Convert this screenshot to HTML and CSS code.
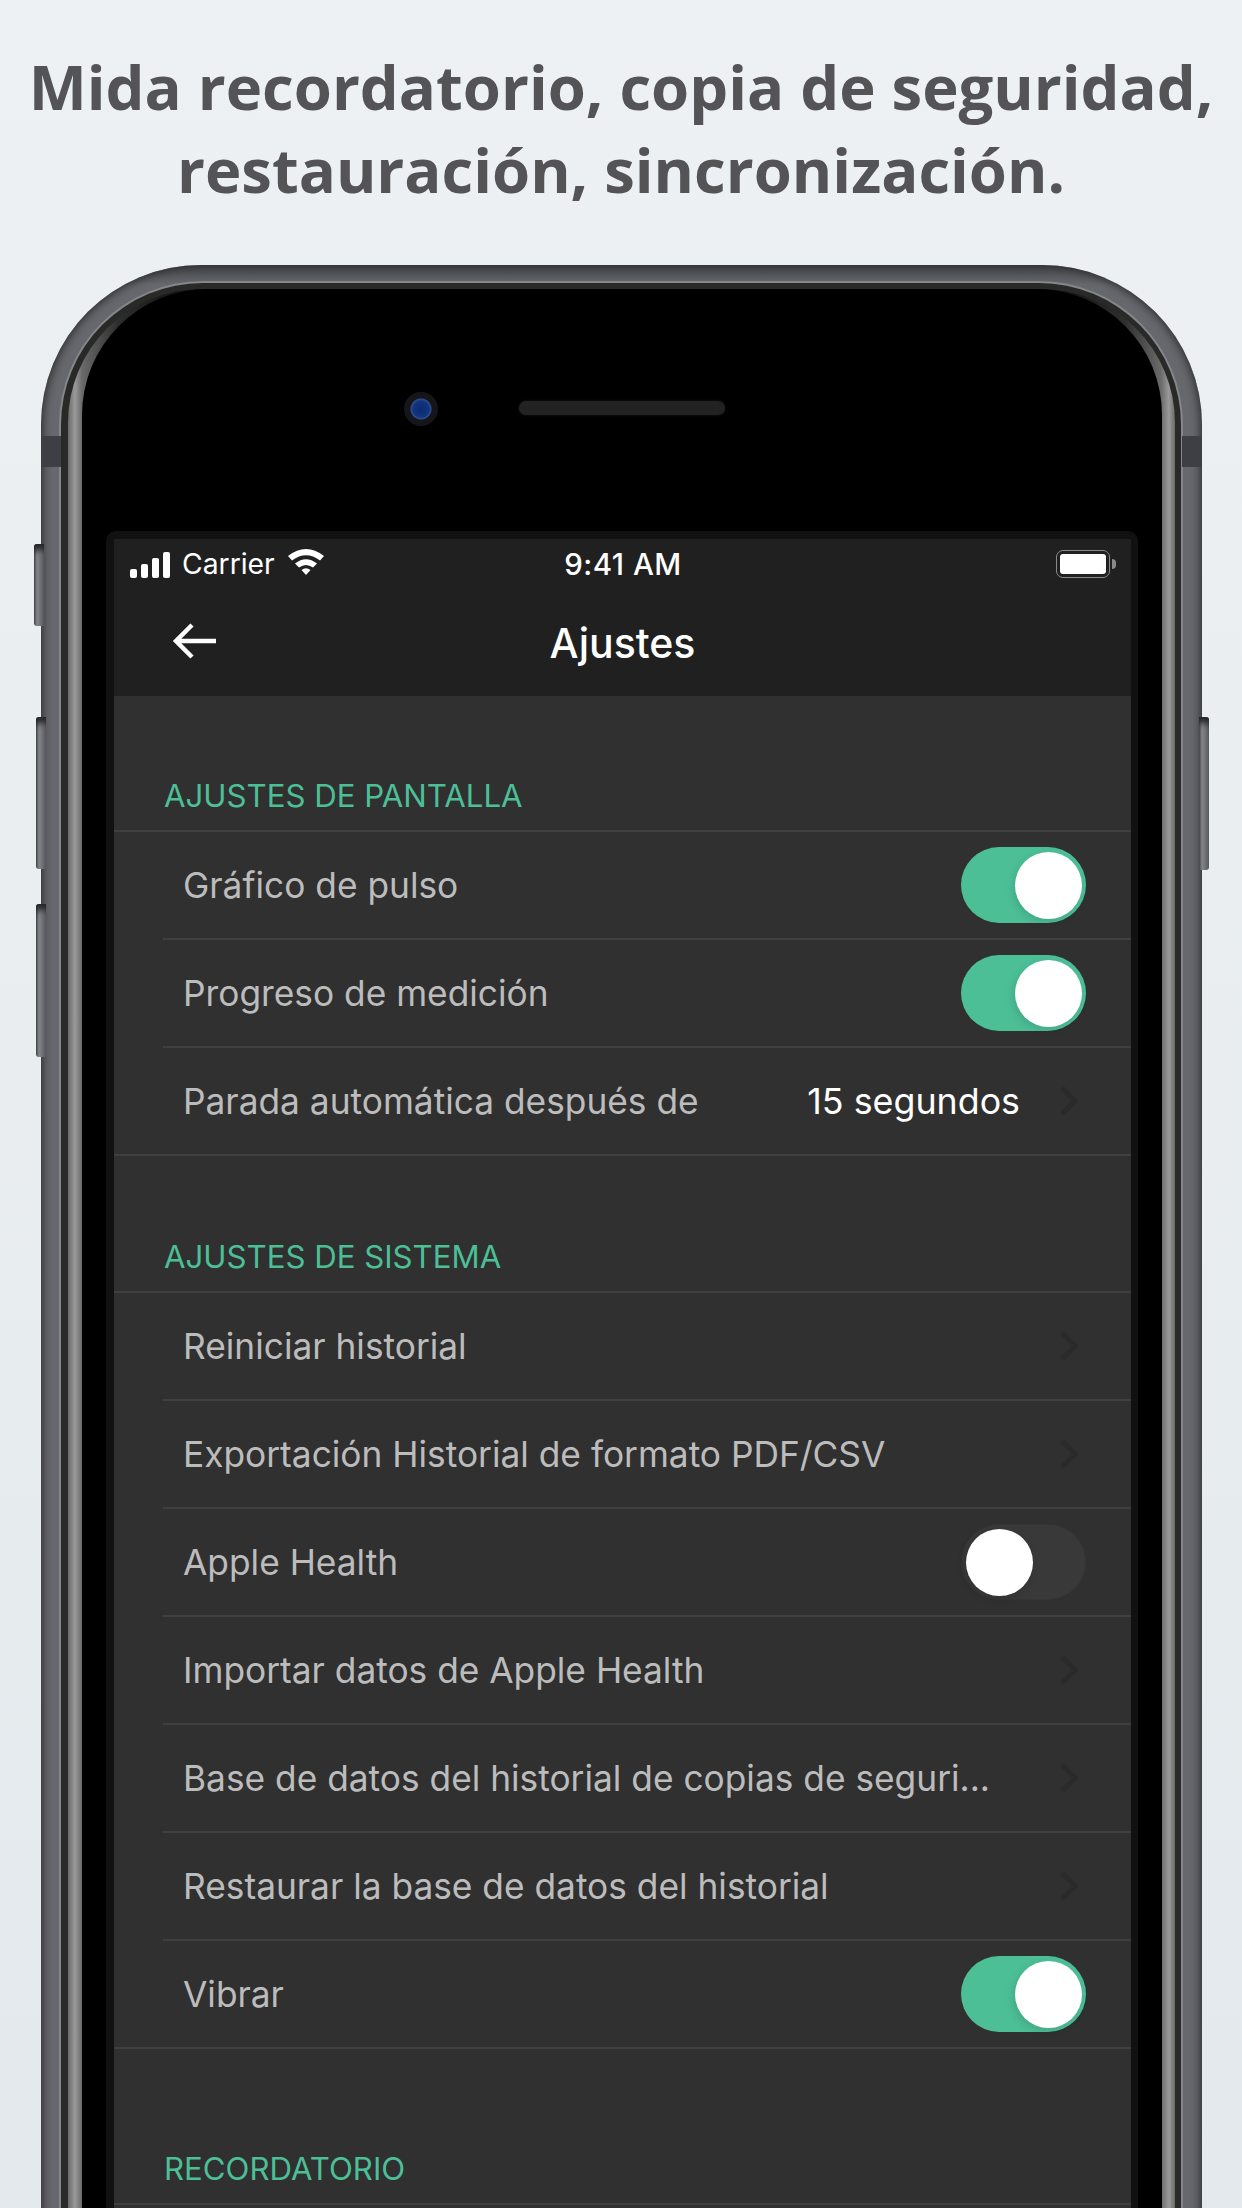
FILE: index.html
```html
<!DOCTYPE html>
<html lang="es">
<head>
  <meta charset="UTF-8">
  <title>Ajustes</title>
  <link rel="stylesheet" href="styles.css">
</head>
<body>
  <div class="page">
    <h1 class="headline">Mida recordatorio, copia de seguridad,<br>restauración, sincronización.</h1>

    <div class="phone">
      <span class="side-btn mute"></span>
      <span class="side-btn vol-up"></span>
      <span class="side-btn vol-down"></span>
      <span class="side-btn power"></span>
      <span class="antenna left"></span>
      <span class="antenna right"></span>

      <div class="groove">
        <div class="ring">
          <div class="face">
            <div class="earpiece">
              <span class="camera"></span>
              <span class="speaker"></span>
            </div>

            <div class="screen-edge">
              <div class="screen">
                <div class="topbar">
                  <div class="statusbar">
                    <div class="status-left">
                      <svg class="signal" width="42" height="26" viewBox="0 0 42 26">
                        <rect x="0" y="17" width="7" height="9" rx="2"/>
                        <rect x="11" y="12" width="7" height="14" rx="2"/>
                        <rect x="22" y="6" width="7" height="20" rx="2"/>
                        <rect x="33" y="0" width="7" height="26" rx="2"/>
                      </svg>
                      <span class="carrier">Carrier</span>
                      <svg class="wifi" width="38" height="28" viewBox="0 0 38 28">
                        <path d="M1 9 Q19 -5 37 9 L33 13.500 Q19 3 5 13.500Z"/>
                        <path d="M8 16.500 Q19 8 30 16.500 L26 20.500 Q19 15.500 12 20.500Z"/>
                        <path d="M14.500 23 Q19 19.500 23.500 23 L19 28Z"/>
                      </svg>
                    </div>
                    <div class="status-time">9:41 AM</div>
                    <div class="status-right">
                      <span class="battery"><span class="battery-fill"></span></span>
                      <span class="battery-cap"></span>
                    </div>
                  </div>
                  <div class="navbar">
                    <svg class="back" width="46" height="36" viewBox="0 0 46 36">
                      <path d="M21 2 L5 18 L21 34 M5 18 H45" fill="none" stroke="#fff" stroke-width="4.500"/>
                    </svg>
                    <div class="nav-title">Ajustes</div>
                  </div>
                </div>

                <div class="section-label first">AJUSTES DE PANTALLA</div>
                <div class="group">
                  <div class="row">
                    <span class="row-label">Gráfico de pulso</span>
                    <span class="toggle on"><span class="knob"></span></span>
                  </div>
                  <div class="row">
                    <span class="row-label">Progreso de medición</span>
                    <span class="toggle on"><span class="knob"></span></span>
                  </div>
                  <div class="row">
                    <span class="row-label">Parada automática después de</span>
                    <span class="row-value">15 segundos</span>
                    <svg class="chevron" width="18" height="30" viewBox="0 0 18 30"><path d="M2 2 L15 15 L2 28"/></svg>
                  </div>
                </div>

                <div class="section-label second">AJUSTES DE SISTEMA</div>
                <div class="group">
                  <div class="row">
                    <span class="row-label">Reiniciar historial</span>
                    <svg class="chevron" width="18" height="30" viewBox="0 0 18 30"><path d="M2 2 L15 15 L2 28"/></svg>
                  </div>
                  <div class="row">
                    <span class="row-label">Exportación Historial de formato PDF/CSV</span>
                    <svg class="chevron" width="18" height="30" viewBox="0 0 18 30"><path d="M2 2 L15 15 L2 28"/></svg>
                  </div>
                  <div class="row">
                    <span class="row-label">Apple Health</span>
                    <span class="toggle"><span class="knob"></span></span>
                  </div>
                  <div class="row">
                    <span class="row-label">Importar datos de Apple Health</span>
                    <svg class="chevron" width="18" height="30" viewBox="0 0 18 30"><path d="M2 2 L15 15 L2 28"/></svg>
                  </div>
                  <div class="row">
                    <span class="row-label">Base de datos del historial de copias de seguri...</span>
                    <svg class="chevron" width="18" height="30" viewBox="0 0 18 30"><path d="M2 2 L15 15 L2 28"/></svg>
                  </div>
                  <div class="row">
                    <span class="row-label">Restaurar la base de datos del historial</span>
                    <svg class="chevron" width="18" height="30" viewBox="0 0 18 30"><path d="M2 2 L15 15 L2 28"/></svg>
                  </div>
                  <div class="row">
                    <span class="row-label">Vibrar</span>
                    <span class="toggle on"><span class="knob"></span></span>
                  </div>
                </div>

                <div class="section-label third">RECORDATORIO</div>
                <div class="group"></div>
              </div>
            </div>
          </div>
        </div>
      </div>
    </div>
  </div>
</body>
</html>
```

FILE: styles.css
```css
html, body {
  margin: 0;
  padding: 0;
  height: 100%;
  overflow: hidden;
}

.page {
  height: 2208px;
  overflow: hidden;
  background: linear-gradient(to bottom, #edf1f3, #e4e9ed);
  font-family: Inter, 'Liberation Sans', sans-serif;
}

.headline {
  margin: 0;
  height: 265px;
  padding-top: 45px;
  box-sizing: border-box;
  font-family: 'Open Sans', 'Noto Sans', sans-serif;
  font-size: 61.600px;
  line-height: 83px;
  font-weight: 700;
  color: #545456;
  text-align: center;
}

/* phone body */
.phone {
  position: relative;
  margin: 0 40px 0 41px;
  height: 2100px;
  padding: 18px 21px 0 20px;
  border-radius: 160px 160px 0 0;
  background: linear-gradient(to bottom, #46474b, #67686d 20px);
  box-shadow: inset 0 0 9px 2px #2e2e32;
}

.groove {
  height: 100%;
  padding: 6px 6px 0 7px;
  border-radius: 142px 142px 0 0;
  background: #292927;
  box-shadow: 0 0 0 2px #85868a;
}

.ring {
  height: 100%;
  padding: 0 13px 0 14px;
  border-radius: 134px 134px 0 0;
  background: linear-gradient(to right, #6a6a6a, #9a9a9a 7px, #6a6a6a 14px, #2e2e2e 50px, #141414 110px, #111 50%, #141414 calc(100% - 110px), #2e2e2e calc(100% - 50px), #6a6a6a calc(100% - 14px), #9a9a9a calc(100% - 6px), #6a6a6a);
}

.face {
  height: 100%;
  border-radius: 126px 126px 0 0;
  background: #000;
  padding: 0 24px;
}

.earpiece {
  height: 242px;
  padding-top: 103px;
  box-sizing: border-box;
  display: flex;
  align-items: flex-start;
}

.camera {
  width: 34px;
  height: 34px;
  margin-left: 298px;
  border-radius: 50%;
  background: radial-gradient(circle at 50% 50%, #0b2a73 0, #12357f 8px, #2c4f90 10px, #16161a 11px, #16161a 17px);
}

.speaker {
  width: 206px;
  height: 14px;
  margin: 9px 0 0 81px;
  border-radius: 7px;
  background: #222;
  box-shadow: 0 0 3px #1a1a1a;
}

.screen-edge {
  padding: 8px 7px 0 8px;
  height: 100%;
  border-radius: 10px 10px 0 0;
  background: #111;
}

.screen {
  background: #303030;
  height: 100%;
}

/* status + nav */
.topbar {
  height: 157px;
  background: #202020;
  color: #fff;
}

.statusbar {
  height: 44px;
  padding: 0 15px 0 16px;
  display: flex;
  align-items: center;
  justify-content: space-between;
  font-size: 28.300px;
}

.status-left {
  display: flex;
  align-items: center;
  width: 300px;
}

.signal {
  fill: #fff;
  margin: 8px 8px 0 0;
}

.carrier {
  margin-left: 2px;
  margin-top: 6px;
}

.wifi {
  fill: #fff;
  margin-left: 12px;
}

.status-time {
  margin-top: 6px;
  font-size: 29.500px;
  font-weight: 500;
  letter-spacing: 0.5px;
}

.status-right {
  display: flex;
  align-items: center;
  justify-content: flex-end;
  width: 300px;
  margin-top: 6px;
}

.battery {
  display: block;
  box-sizing: border-box;
  width: 54px;
  height: 28px;
  padding: 3px;
  border: 1.5px solid #8a8a8a;
  border-radius: 7px;
}

.battery-fill {
  display: block;
  height: 100%;
  border-radius: 3px;
  background: #fff;
}

.battery-cap {
  width: 4px;
  height: 10px;
  margin-left: 2px;
  border-radius: 0 5px 5px 0;
  background: #8a8a8a;
}

.navbar {
  position: relative;
  height: 113px;
  display: flex;
  align-items: center;
  justify-content: center;
}

.back {
  position: absolute;
  left: 57px;
  top: 40px;
}

.nav-title {
  font-size: 41px;
  font-weight: 500;
  margin-top: 6px;
}

/* settings list */
.section-label {
  padding-left: 50px;
  color: #4cbf97;
  font-size: 31.200px;
  display: flex;
  align-items: flex-end;
  padding-bottom: 16px;
  box-sizing: border-box;
}

.section-label.first { height: 135px; }
.section-label.second { height: 136px; }
.section-label.third { height: 155px; }

.group {
  border-top: 2px solid #404040;
  margin-top: -1px;
}

.row {
  display: flex;
  align-items: center;
  box-sizing: border-box;
  height: 108px;
  margin-left: 49px;
  padding: 0 45px 0 20px;
  border-bottom: 2px solid #404040;
}

.row:last-child {
  margin-left: 0;
  padding-left: 69px;
}

.row-label {
  flex: 1;
  color: #bcbcbc;
  font-size: 35.300px;
  white-space: nowrap;
}

.row-value {
  color: #fff;
  font-size: 35.800px;
  margin-right: 40px;
}

.chevron {
  fill: none;
  stroke: #2a2a2a;
  stroke-width: 5;
  margin-right: 8px;
}

.toggle {
  display: flex;
  align-items: center;
  box-sizing: border-box;
  width: 125px;
  height: 76px;
  padding: 0 5px;
  border-radius: 38px;
  background: #393939;
  box-shadow: inset 0 0 0 1px #353535;
}

.toggle.on {
  justify-content: flex-end;
  padding: 0 4px;
  background: #4cbf97;
  box-shadow: none;
}

.knob {
  width: 67px;
  height: 67px;
  border-radius: 50%;
  background: #fff;
  box-shadow: -2px 3px 8px rgba(0, 0, 0, 0.12);
}

/* bits on the frame */
.side-btn {
  position: absolute;
  width: 10px;
  background: linear-gradient(to right, #45464b, #85868b 30%, #5b5c62);
  border-radius: 3px 0 0 3px;
  box-shadow: inset 0 10px 6px -4px #26262a;
}

.mute { left: -7px; top: 279px; height: 82px; }
.vol-up { left: -5px; top: 452px; height: 152px; }
.vol-down { left: -5px; top: 639px; height: 153px; }
.power { right: -7px; top: 452px; height: 153px; border-radius: 0 3px 3px 0; }

.antenna {
  position: absolute;
  top: 171px;
  height: 31px;
  width: 20px;
  background: #3d3f45;
}

.antenna.left { left: 0; }
.antenna.right { right: 0; }
```
